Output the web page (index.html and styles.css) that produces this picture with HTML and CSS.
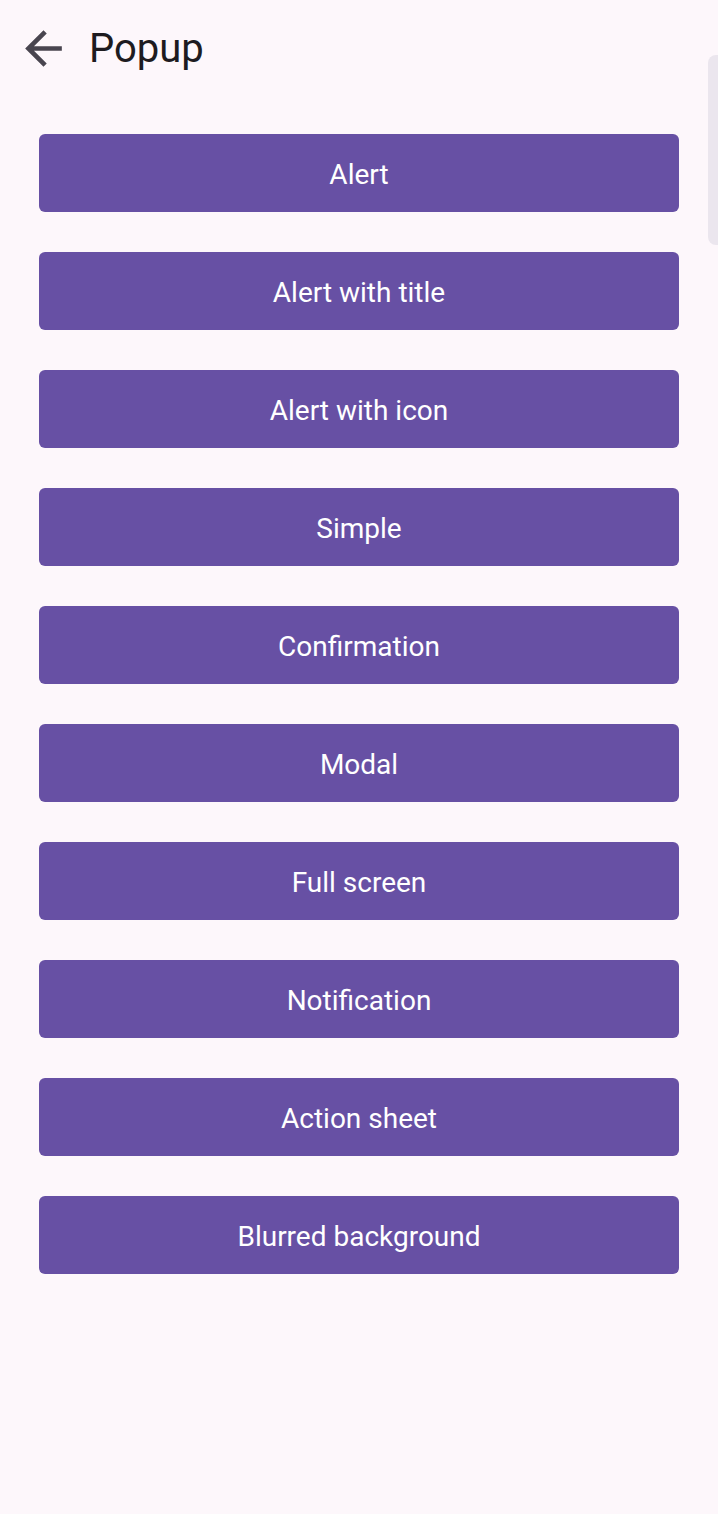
FILE: index.html
```html
<!DOCTYPE html>
<html lang="en">
<head>
    <meta charset="UTF-8">
    <meta name="viewport" content="width=device-width, initial-scale=1.0">
    <title>Popup</title>
    <link rel="stylesheet" href="styles.css">
</head>
<body>
    <div class="screen">
        <div class="top-bar">
            <button class="back-btn" aria-label="Back">
                <svg width="55" height="55" viewBox="0 0 24 24">
                    <path d="M20 11H7.83l5.59-5.59L12 4l-8 8 8 8 1.41-1.41L7.83 13H20v-2z" fill="#49454f"/>
                </svg>
            </button>
            <h1 class="title">Popup</h1>
        </div>
        <div class="button-list">
            <button class="popup-btn">Alert</button>
            <button class="popup-btn">Alert with title</button>
            <button class="popup-btn">Alert with icon</button>
            <button class="popup-btn">Simple</button>
            <button class="popup-btn">Confirmation</button>
            <button class="popup-btn">Modal</button>
            <button class="popup-btn">Full screen</button>
            <button class="popup-btn">Notification</button>
            <button class="popup-btn">Action sheet</button>
            <button class="popup-btn">Blurred background</button>
        </div>
        <div class="scroll-thumb"></div>
    </div>
</body>
</html>
```
FILE: styles.css
```css
body {
    font-family: Roboto, sans-serif;
    margin: 0;
    padding: 0;
    background-color: #fdf7fb;
    color: #1d1b20;
}
.screen {
    position: relative;
    height: 1514px;
}
.top-bar {
    display: flex;
    align-items: center;
    height: 96px;
    padding-left: 16px;
}
.back-btn {
    background: none;
    border: none;
    padding: 0;
    width: 55px;
    height: 55px;
    cursor: pointer;
}
.back-btn svg {
    display: block;
}
.title {
    margin: 0 0 0 18px;
    font-size: 40px;
    font-weight: 400;
}
.button-list {
    display: flex;
    flex-direction: column;
    gap: 40px;
    padding: 38px 39px 0;
}
.popup-btn {
    height: 78px;
    padding-top: 4px;
    border: none;
    border-radius: 6px;
    background-color: #6750a4;
    color: #fff;
    font-family: Roboto, sans-serif;
    font-size: 28px;
    cursor: pointer;
}
.scroll-thumb {
    position: absolute;
    top: 55px;
    right: 0;
    width: 10px;
    height: 190px;
    background-color: #ebe6ee;
    border-radius: 8px 0 0 8px;
}
```
